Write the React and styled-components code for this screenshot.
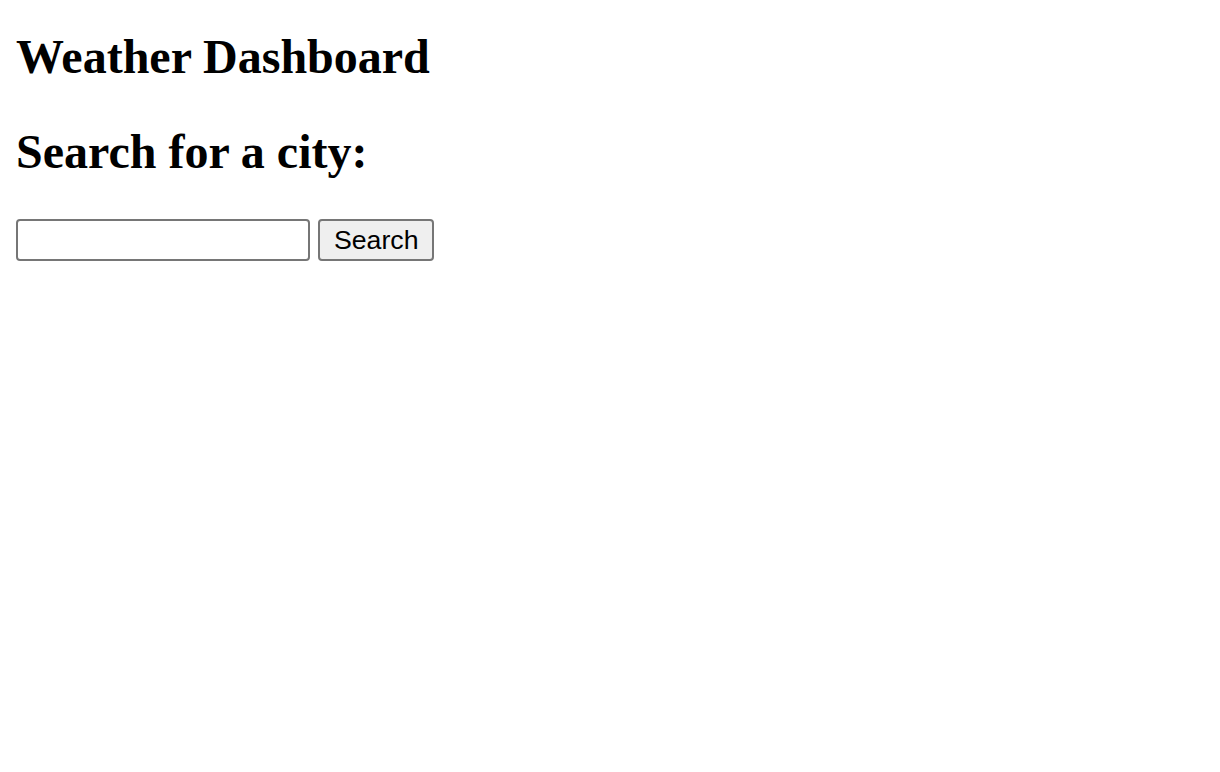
import React from "react";
import styled, { createGlobalStyle } from "styled-components";

const GlobalStyle = createGlobalStyle`
  html, body { margin: 0; padding: 0; background: #ffffff; }
  body { font-family: "Liberation Serif", "Times New Roman", serif; color: #000; }
`;

const Page = styled.main`
  padding: 29px 16px 0;
`;

const Title = styled.h1`
  margin: 0 0 40px;
  font-family: "Liberation Serif", "Times New Roman", serif;
  font-size: 48px;
  font-weight: 700;
  line-height: normal;
`;

const Subtitle = styled.h2`
  margin: 0 0 40px;
  font-family: "Liberation Serif", "Times New Roman", serif;
  font-size: 48px;
  font-weight: 700;
  line-height: normal;
`;

const SearchForm = styled.form`
  display: flex;
  align-items: center;
  gap: 8px;
`;

const CityInput = styled.input`
  box-sizing: border-box;
  width: 294px;
  height: 42px;
  margin: 0;
  padding: 2px 4px;
  border: 2px solid #767676;
  border-radius: 4px;
  background: #ffffff;
  font-family: "Liberation Sans", Arial, sans-serif;
  font-size: 26px;
  outline: none;
`;

const SearchButton = styled.button`
  box-sizing: border-box;
  height: 42px;
  margin: 0;
  padding: 0 14px;
  border: 2px solid #767676;
  border-radius: 4px;
  background: #efefef;
  color: #000;
  font-family: "Liberation Sans", Arial, sans-serif;
  font-size: 26.67px;
  line-height: 1;
  cursor: pointer;
`;

export default function App() {
  return (
    <>
      <GlobalStyle />
      <Page>
        <Title>Weather Dashboard</Title>
        <Subtitle>Search for a city:</Subtitle>
        <SearchForm onSubmit={(e) => e.preventDefault()}>
          <CityInput type="text" />
          <SearchButton type="submit">Search</SearchButton>
        </SearchForm>
      </Page>
    </>
  );
}
